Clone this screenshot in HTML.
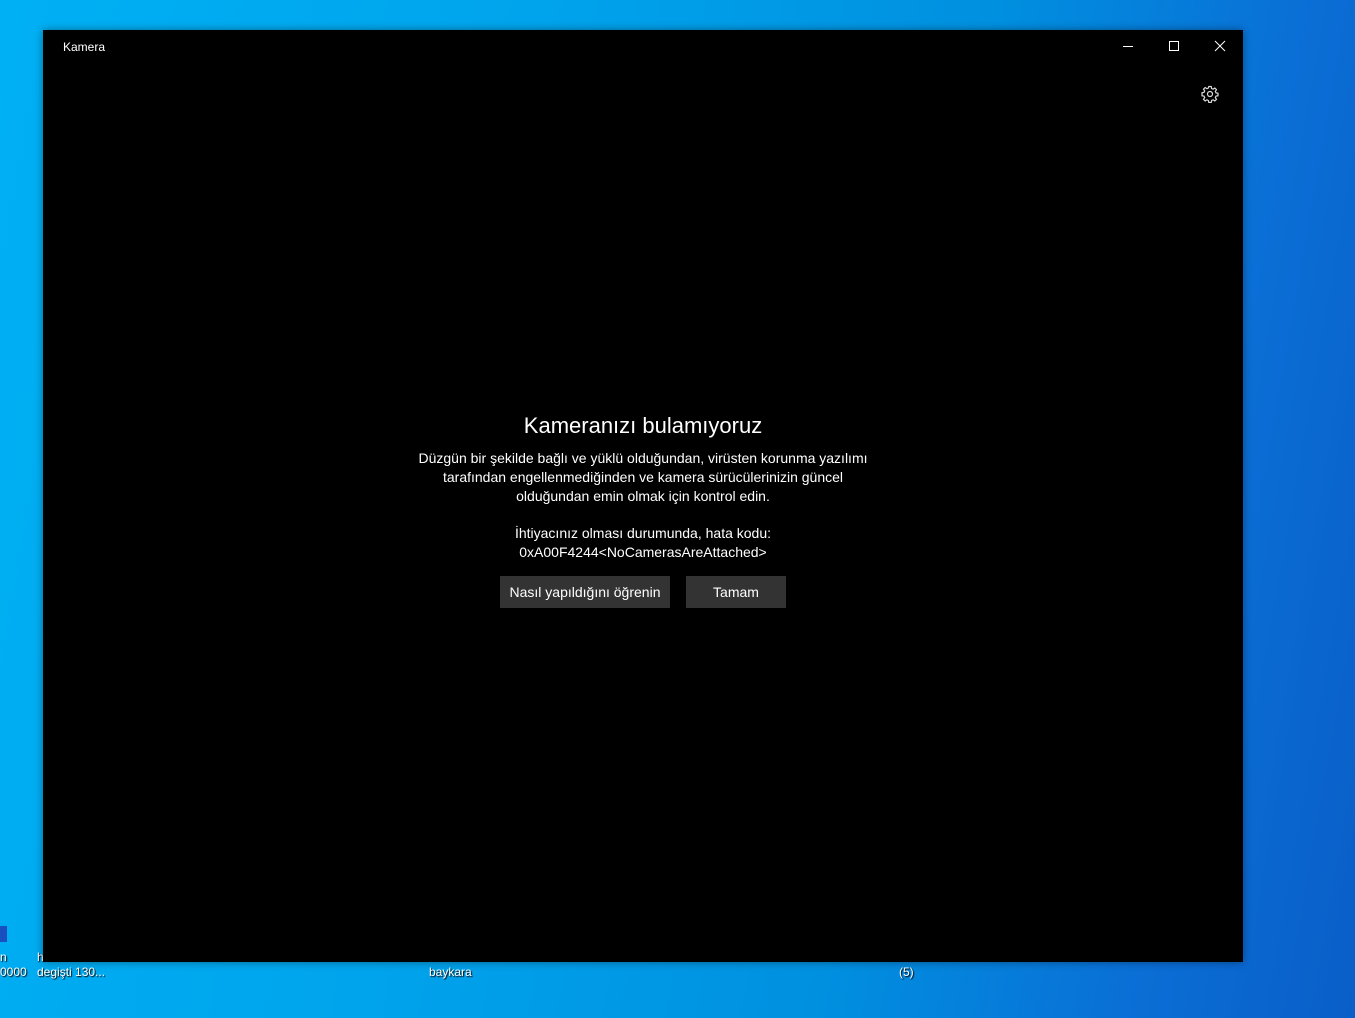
<!DOCTYPE html>
<html><head><meta charset="utf-8"><style>
html,body{margin:0;padding:0;width:1355px;height:1018px;overflow:hidden;font-family:"Liberation Sans","DejaVu Sans",sans-serif;}
body{background:linear-gradient(100deg,#00b0f4 0%,#00a4ec 35%,#0090e0 65%,#0a6fd6 85%,#0a5ec8 100%);position:relative;}
.win{position:absolute;left:43px;top:30px;width:1200px;height:932px;background:#000;box-shadow:0 0 8px rgba(0,0,0,.4);}
.title{position:absolute;left:20px;top:10px;color:#fff;font-size:12px;}
.c{color:#fff;text-align:center;position:absolute;left:0;width:1200px;}
.btn{position:absolute;top:546px;height:32px;background:#333;color:#fff;font-size:14px;line-height:32px;text-align:center;}
.lbl{position:absolute;color:#fff;font-size:12px;text-shadow:1px 1px 1px #000;}
</style></head><body>
<div style="position:absolute;left:0;top:926px;width:7px;height:16px;background:#1a4fc0;"></div>
<div class="lbl" style="left:0;top:950px">n</div>
<div class="lbl" style="left:0;top:965px">0000</div>
<div class="lbl" style="left:37px;top:950px">h</div>
<div class="lbl" style="left:37px;top:965px">degişti 130...</div>
<div class="lbl" style="left:429px;top:965px">baykara</div>
<div class="lbl" style="left:899px;top:965px">(5)</div>
<div class="win">
<div class="title">Kamera</div>
<svg style="position:absolute;left:1075px;top:10px" width="120" height="12"><line x1="5" y1="6.5" x2="15" y2="6.5" stroke="#fff"/><rect x="51.5" y="1.5" width="9" height="9" fill="none" stroke="#fff"/><path d="M97 1L107 11M107 1L97 11" stroke="#fff"/></svg>
<svg style="position:absolute;left:1158px;top:55px" width="18" height="18" viewBox="0 0 18 18"><g fill="none" stroke="#ddd" stroke-width="1.2"><circle cx="9" cy="9" r="2.5"/><path d="M7.8 1.5h2.4l.4 2 1.5.7 1.7-1.2 1.7 1.7-1.2 1.7.7 1.5 2 .4v2.4l-2 .4-.7 1.5 1.2 1.7-1.7 1.7-1.7-1.2-1.5.7-.4 2H7.8l-.4-2-1.5-.7-1.7 1.2-1.7-1.7 1.2-1.7-.7-1.5-2-.4V7.8l2-.4.7-1.5-1.2-1.7 1.7-1.7 1.7 1.2 1.5-.7z"/></g></svg>
<div class="c" style="top:383px;font-size:22px;">Kameranızı bulamıyoruz</div>
<div class="c" style="top:419px;font-size:14px;line-height:19px;">Düzgün bir şekilde bağlı ve yüklü olduğundan, virüsten korunma yazılımı<br>tarafından engellenmediğinden ve kamera sürücülerinizin güncel<br>olduğundan emin olmak için kontrol edin.</div>
<div class="c" style="top:494px;font-size:14px;line-height:19px;">İhtiyacınız olması durumunda, hata kodu:<br>0xA00F4244&lt;NoCamerasAreAttached&gt;</div>
<div class="btn" style="left:457px;width:170px;">Nasıl yapıldığını öğrenin</div>
<div class="btn" style="left:643px;width:100px;">Tamam</div>
</div>
</body></html>
